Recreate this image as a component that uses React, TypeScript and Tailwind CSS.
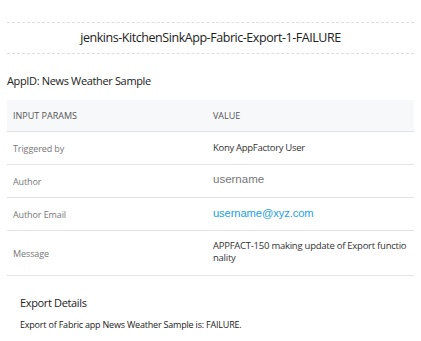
export default function App() {
  const rows = [
    { label: 'Triggered by', value: <span className="text-[9.5px] tracking-[-0.3px] text-[#333]">Kony AppFactory User</span>, h: 'h-[33px]' },
    { label: 'Author', value: <span className="font-['Liberation_Sans',sans-serif] text-[11.5px] text-[#777] -mt-[3px] block">username</span>, h: 'h-[33px]' },
    { label: 'Author Email', value: <span className="font-['Liberation_Sans',sans-serif] text-[11.2px] tracking-[-0.1px] text-[#1ba1e2] -mt-[1px] block">username@xyz.com</span>, h: 'h-[33px]' },
    {
      label: 'Message',
      value: (
        <span className="text-[9.5px] tracking-[-0.25px] text-[#333] leading-[12px] block whitespace-nowrap -mt-[3px]">
          APPFACT-150 making update of Export functio
          <br />
          nality
        </span>
      ),
      h: 'h-[45px]',
    },
  ];

  return (
    <div className="w-[421px] h-[341px] bg-white font-['Open_Sans',sans-serif] text-[#222]">
      <div className="px-[7px] pt-[22px]">
        <div className="border-y border-dashed border-[#dedede] h-[32px] flex items-center justify-center">
          <span className="text-[12.5px] tracking-[-0.45px]">jenkins-KitchenSinkApp-Fabric-Export-1-FAILURE</span>
        </div>
        <div className="h-[46px] flex items-center text-[11px] tracking-[-0.35px] pt-[9px]">AppID: News Weather Sample</div>
        <div className="text-[9px]">
          <div className="h-[32px] bg-[#f7f8fa] border-b border-[#e3e3e3] flex items-center text-[#555]">
            <div className="w-[206px] pl-[6px]">INPUT PARAMS</div>
            <div>VALUE</div>
          </div>
          {rows.map((r) => (
            <div key={r.label} className={`${r.h} border-b border-[#e3e3e3] flex items-center`}>
              <div className="w-[206px] pl-[6px] text-[#777] text-[9px] tracking-[-0.1px] pt-[2px]">{r.label}</div>
              <div className="flex-1">{r.value}</div>
            </div>
          ))}
        </div>
        <div className="pl-[13px] pt-[19px]">
          <div className="text-[11px] tracking-[-0.35px]">Export Details</div>
          <div className="text-[9px] tracking-[-0.2px] mt-[6px]">Export of Fabric app News Weather Sample is: FAILURE.</div>
        </div>
      </div>
    </div>
  );
}
